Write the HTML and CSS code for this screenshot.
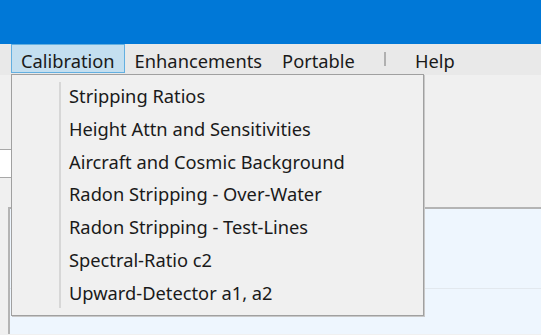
FILE: index.html
```html
<!DOCTYPE html>
<html>
<head>
    <title>Calibration</title>
    <link rel="stylesheet" href="styles.css">
</head>
<body>
    <div class="titlebar"></div>

    <div class="menubar">
        <span class="menu-item active">Calibration</span>
        <span class="menu-item">Enhancements</span>
        <span class="menu-item">Portable</span>
        <span class="menu-sep"></span>
        <span class="menu-item">Help</span>

        <div class="dropdown">
            <div class="dropdown-item">Stripping Ratios</div>
            <div class="dropdown-item">Height Attn and Sensitivities</div>
            <div class="dropdown-item">Aircraft and Cosmic Background</div>
            <div class="dropdown-item">Radon Stripping - Over-Water</div>
            <div class="dropdown-item">Radon Stripping - Test-Lines</div>
            <div class="dropdown-item">Spectral-Ratio c2</div>
            <div class="dropdown-item">Upward-Detector a1, a2</div>
        </div>
    </div>

    <div class="content">
        <div class="field"></div>
        <div class="panel">
            <div class="panel-row"></div>
        </div>
    </div>
</body>
</html>
```

FILE: styles.css
```css
body {
    margin: 0;
    padding: 0;
    width: 541px;
    height: 335px;
    overflow: hidden;
    background-color: #f0f0f0;
    font-family: "Noto Sans", "Open Sans", sans-serif;
    color: #1a1a1a;
}

.titlebar {
    height: 44px;
    background-color: #0078d7;
}

.menubar {
    position: relative;
    display: flex;
    align-items: flex-start;
    height: 31px;
    padding-left: 11px;
    background-color: #e9e9e9;
    font-size: 18.3px;
}

.menu-item {
    height: 27px;
    line-height: 31px;
    padding: 0 9px;
    border: 1px solid transparent;
}

.menu-item.active {
    background-color: #c4dff0;
    border-color: #63afe0;
}

.menu-sep {
    width: 2px;
    height: 14px;
    margin: 8px 19px 0 19px;
    background-color: #b0b0b0;
}

.dropdown {
    position: absolute;
    top: 30px;
    left: 11px;
    width: 411px;
    height: 232px;
    padding: 5px 0 3px 0;
    border: 1px solid #a0a0a0;
    box-shadow: 1px 1px 0 #c8c8c8;
    background-color: #f0f0f0;
    font-size: 18.3px;
    z-index: 2;
}

.dropdown::before {
    content: "";
    position: absolute;
    top: 7px;
    bottom: 7px;
    left: 47px;
    width: 2px;
    background-color: #d7d7d7;
}

.dropdown-item {
    height: 32.8px;
    line-height: 32.8px;
    padding-left: 57px;
}

.content {
    padding-top: 74px;
}

.field {
    width: 300px;
    height: 27px;
    background-color: #ffffff;
    border-top: 1px solid #a8a8a8;
    border-bottom: 1px solid #a8a8a8;
}

.panel {
    margin: 29px 0 0 8px;
    height: 125px;
    border-top: 2px solid #b4b4b4;
    border-left: 2px solid #b4b4b4;
    background-color: #eef6fe;
}

.panel-row {
    height: 79px;
    border-bottom: 1px solid #e2e8ee;
}
```
